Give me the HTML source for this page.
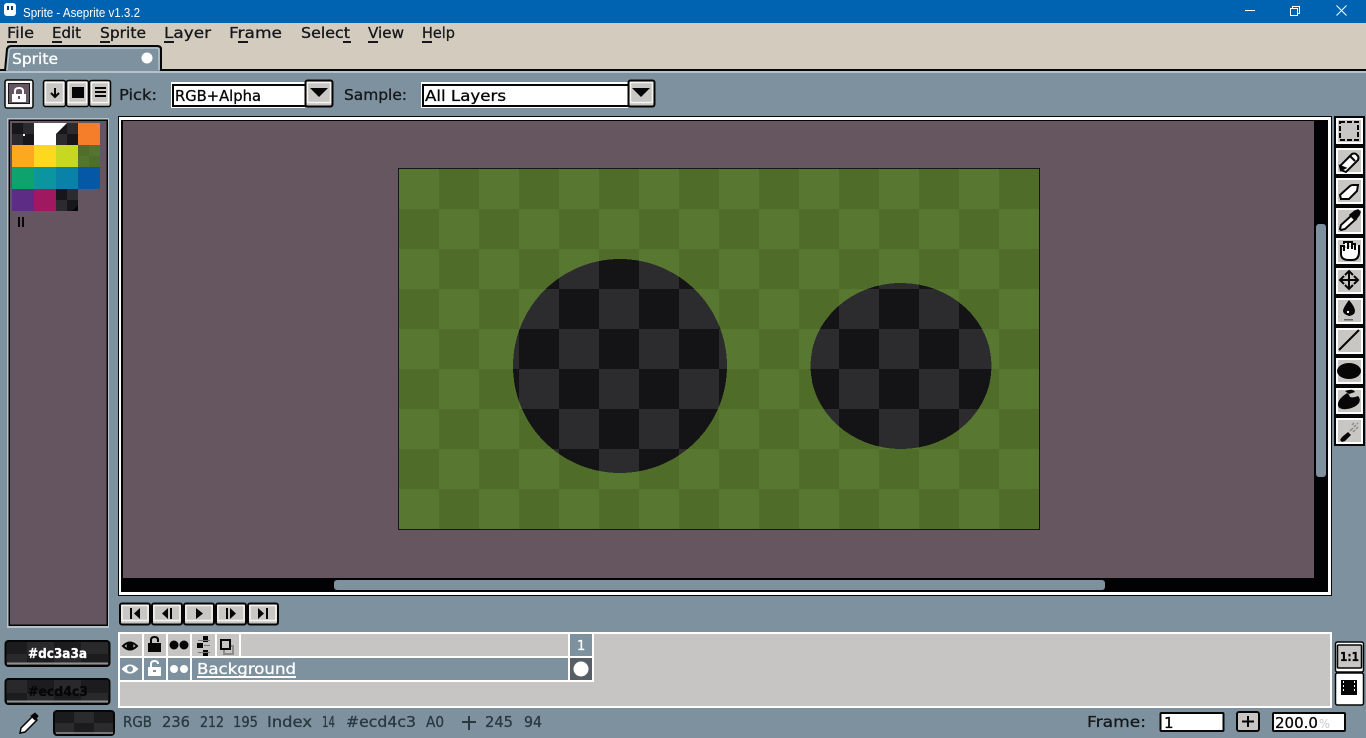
<!DOCTYPE html>
<html><head><meta charset="utf-8"><title>Sprite - Aseprite v1.3.2</title>
<style>
html,body{margin:0;padding:0;width:1366px;height:738px;overflow:hidden;background:#7d929e}
svg{display:block}
text{font-family:"DejaVu Sans","Liberation Sans",sans-serif;font-size:15px;fill:#15171a;stroke:#15171a;stroke-width:.3px;white-space:pre}
.s{font-size:15px;fill:#2a3840;stroke:#2a3840}
.w{fill:#fff;stroke:#fff}
.k{fill:#060606;stroke:#060606}
.r{shape-rendering:crispEdges}
.hl{fill:none;stroke:#f4f4f2;stroke-width:1.500px}
</style></head><body>
<svg width="1366" height="738" viewBox="0 0 1366 738" xmlns="http://www.w3.org/2000/svg">
<defs>
<pattern id="gr" patternUnits="userSpaceOnUse" x="399" y="169" width="80" height="80"><rect width="80" height="80" fill="#587831"/><rect x="40" width="40" height="40" fill="#4f6c28"/><rect y="40" width="40" height="40" fill="#4f6c28"/></pattern>
<pattern id="dk" patternUnits="userSpaceOnUse" x="399" y="169" width="80" height="80"><rect width="80" height="80" fill="#2c2c2f"/><rect x="40" width="40" height="40" fill="#141417"/><rect y="40" width="40" height="40" fill="#141417"/></pattern>
<pattern id="c1" patternUnits="userSpaceOnUse" x="12" y="123" width="22" height="22"><rect width="22" height="22" fill="#2b2b2f"/><rect width="11" height="11" fill="#17171b"/><rect x="11" y="11" width="11" height="11" fill="#17171b"/></pattern>
<pattern id="c3" patternUnits="userSpaceOnUse" x="0" y="641" width="54" height="26"><rect width="54" height="26" fill="#29292c"/><rect width="27" height="13" fill="#1c1c1f"/><rect x="27" y="13" width="27" height="13" fill="#1c1c1f"/></pattern>
<pattern id="c4" patternUnits="userSpaceOnUse" x="54" y="711" width="40" height="24"><rect width="40" height="24" fill="#2b2b2e"/><rect width="20" height="12" fill="#1b1b1e"/><rect x="20" y="12" width="20" height="12" fill="#1b1b1e"/></pattern>
</defs>

<!-- base -->
<rect class="r" width="1366" height="738" fill="#7d929e"/>
<rect class="r" width="1366" height="23" fill="#0063b1"/>
<rect class="r" y="23" width="1366" height="46" fill="#d3cbbe"/>
<rect class="r" y="69" width="1366" height="2" fill="#060606"/>
<rect class="r" y="71" width="1366" height="2" fill="#b4c3cb"/>

<!-- title bar -->
<rect x="4" y="3" width="12" height="13" rx="3" fill="#fff"/><rect x="7" y="6" width="2" height="4" fill="#0c3a66"/><rect x="11" y="6" width="2" height="4" fill="#0c3a66"/>
<text x="23" y="17" textLength="117" lengthAdjust="spacingAndGlyphs" style="font:12.500px 'Liberation Sans',sans-serif;fill:#fff;stroke:none">Sprite - Aseprite v1.3.2</text>
<rect class="r" x="1245" y="10" width="10" height="1" fill="#fff"/>
<path d="M1290.500 8.500h7v7h-7zM1292.500 8.500v-2h7v7h-2" fill="none" stroke="#fff"/>
<path d="M1336.500 5.500l10 10M1346.500 5.500l-10 10" fill="none" stroke="#fff"/>

<!-- menu -->
<text x="7" y="38" textLength="27" lengthAdjust="spacingAndGlyphs">File</text><rect class="r" x="7" y="41" width="10" height="2" fill="#15171a"/>
<text x="52" y="38" textLength="29" lengthAdjust="spacingAndGlyphs">Edit</text><rect class="r" x="52" y="41" width="10" height="2" fill="#15171a"/>
<text x="100" y="38" textLength="46" lengthAdjust="spacingAndGlyphs">Sprite</text><rect class="r" x="100" y="41" width="10" height="2" fill="#15171a"/>
<text x="164" y="38" textLength="47" lengthAdjust="spacingAndGlyphs">Layer</text><rect class="r" x="164" y="41" width="10" height="2" fill="#15171a"/>
<text x="229" y="38" textLength="53" lengthAdjust="spacingAndGlyphs">Frame</text><rect class="r" x="238" y="41" width="10" height="2" fill="#15171a"/>
<text x="301" y="38" textLength="49" lengthAdjust="spacingAndGlyphs">Select</text><rect class="r" x="343" y="41" width="8" height="2" fill="#15171a"/>
<text x="368" y="38" textLength="36" lengthAdjust="spacingAndGlyphs">View</text><rect class="r" x="368" y="41" width="10" height="2" fill="#15171a"/>
<text x="422" y="38" textLength="33" lengthAdjust="spacingAndGlyphs">Help</text><rect class="r" x="422" y="41" width="10" height="2" fill="#15171a"/>

<!-- tab -->
<path d="M5 71 L7 49 Q8 46 11 46 H157 Q161 46 161 49 V71" fill="#7d929e" stroke="#060606" stroke-width="2"/>
<path d="M7 70 L9 50 Q10 48 12 48 H156 Q159 48 159 50 V70" fill="#7d929e" stroke="#b4c3cb" stroke-width="1.500"/>
<text class="w" x="12" y="64" textLength="46" lengthAdjust="spacingAndGlyphs">Sprite</text>
<circle cx="147" cy="58" r="5.500" fill="#fff"/>
<rect class="r" x="0" y="69" width="5" height="2" fill="#060606"/>
<rect class="r" x="161" y="69" width="6" height="2" fill="#060606"/>

<!-- toolbar: lock -->
<rect x="5" y="80" width="28" height="28" rx="2" fill="#f4f4f2" stroke="#060606" stroke-width="1.500"/>
<rect x="8.500" y="83.500" width="21" height="20" fill="#655561" stroke="#15171a"/>
<rect class="r" x="12" y="94" width="14" height="8" fill="#fff"/><path d="M15 94v-3q0-3 4-3t4 3v3" fill="none" stroke="#fff" stroke-width="2"/><rect class="r" x="18" y="96" width="2" height="3" fill="#655561"/>
<!-- toolbar: group -->
<rect x="43.500" y="80.500" width="22" height="26" rx="2" fill="#c8c7c3" stroke="#060606" stroke-width="1.500"/><rect class="hl" x="45.500" y="82.500" width="18" height="20"/>
<rect x="66.500" y="80.500" width="22" height="26" rx="2" fill="#c8c7c3" stroke="#060606" stroke-width="1.500"/><rect class="hl" x="68.500" y="82.500" width="18" height="20"/>
<rect x="89.500" y="80.500" width="21" height="26" rx="2" fill="#c8c7c3" stroke="#060606" stroke-width="1.500"/><rect class="hl" x="91.500" y="82.500" width="17" height="20"/>
<path d="M55 88v9M51 93l4 4 4-4" fill="none" stroke="#060606" stroke-width="2"/>
<rect class="r" x="72" y="87" width="12" height="11" fill="#060606"/>
<rect class="r" x="95" y="87" width="11" height="2" fill="#060606"/><rect class="r" x="95" y="91" width="11" height="2" fill="#060606"/><rect class="r" x="95" y="95" width="11" height="2" fill="#060606"/>

<text x="119" y="100" textLength="38" lengthAdjust="spacingAndGlyphs">Pick:</text>
<rect class="r" x="171" y="82" width="134" height="26" fill="#fff"/>
<rect class="r" x="173" y="85" width="133" height="21" fill="#fff" stroke="#060606" stroke-width="2"/>
<text class="k" x="175" y="101" textLength="86" lengthAdjust="spacingAndGlyphs">RGB+Alpha</text>
<rect x="305.500" y="80.500" width="27" height="26" rx="2" fill="#c8c7c3" stroke="#060606" stroke-width="2"/><rect class="hl" x="307.500" y="82.500" width="23" height="20"/>
<path d="M310 88h18l-9 9z" fill="#060606"/>

<text x="344" y="100" textLength="63" lengthAdjust="spacingAndGlyphs">Sample:</text>
<rect class="r" x="421" y="82" width="207" height="26" fill="#fff"/>
<rect class="r" x="423" y="85" width="206" height="21" fill="#fff" stroke="#060606" stroke-width="2"/>
<text class="k" x="425" y="101" textLength="81" lengthAdjust="spacingAndGlyphs">All Layers</text>
<rect x="628.500" y="80.500" width="26" height="26" rx="2" fill="#c8c7c3" stroke="#060606" stroke-width="2"/><rect class="hl" x="630.500" y="82.500" width="22" height="20"/>
<path d="M632 88h18l-9 9z" fill="#060606"/>

<!-- palette -->
<rect class="r" x="7" y="118" width="102" height="510" fill="#b4c3cb"/>
<rect class="r" x="9" y="120" width="98" height="505" fill="#655561" stroke="#060606" stroke-width="1.500"/>
<rect class="r" x="12" y="123" width="22" height="22" fill="url(#c1)"/>
<rect class="r" x="23" y="134" width="2" height="2" fill="#fff"/>
<rect class="r" x="34" y="123" width="22" height="22" fill="#fff"/>
<rect class="r" x="56" y="123" width="22" height="22" fill="url(#c1)"/>
<path d="M56 123h11l-11 11z" fill="#fff"/>
<rect class="r" x="78" y="123" width="22" height="22" fill="#f47e2a"/>
<rect class="r" x="12" y="145" width="22" height="22" fill="#fca91e"/>
<rect class="r" x="34" y="145" width="22" height="22" fill="#fcd91e"/>
<rect class="r" x="56" y="145" width="22" height="22" fill="#c6d81f"/>
<g class="r"><rect x="78" y="145" width="22" height="22" fill="#55742f"/><rect x="78" y="145" width="11" height="11" fill="#4f6d2b"/><rect x="89" y="156" width="11" height="11" fill="#4f6d2b"/></g>
<rect class="r" x="12" y="167" width="22" height="22" fill="#0ea36d"/>
<rect class="r" x="34" y="167" width="22" height="22" fill="#0a95a0"/>
<rect class="r" x="56" y="167" width="22" height="22" fill="#0a82a8"/>
<rect class="r" x="78" y="167" width="22" height="22" fill="#0458a6"/>
<rect class="r" x="12" y="189" width="22" height="22" fill="#5d2d85"/>
<rect class="r" x="34" y="189" width="22" height="22" fill="#a01860"/>
<rect class="r" x="56" y="189" width="22" height="22" fill="url(#c1)"/>
<path d="M78 211h-6l6-6z" fill="#060606"/>
<rect class="r" x="18" y="217" width="2" height="10" fill="#060606"/><rect class="r" x="22" y="217" width="2" height="10" fill="#060606"/>

<!-- editor -->
<rect class="r" x="118" y="116" width="1214" height="480" fill="#060606"/>
<rect class="r" x="119" y="117" width="1212" height="478" fill="#fff"/>
<rect class="r" x="121" y="120" width="1207" height="472" fill="#020204"/>
<rect class="r" x="123" y="121" width="1191" height="457" fill="#665660"/>
<rect class="r" x="398.500" y="168.500" width="641" height="361" fill="url(#gr)" stroke="#15171a"/>
<ellipse cx="620" cy="366" rx="107" ry="107" fill="url(#dk)" class="r"/>
<ellipse cx="901" cy="366" rx="90.500" ry="83" fill="url(#dk)" class="r"/>
<rect x="334" y="580" width="771" height="10" rx="3" fill="#7d929e"/>
<rect x="1316" y="224" width="10" height="253" rx="3" fill="#7d929e"/>

<!-- tools -->
<rect class="r" x="1334" y="116" width="31" height="330" fill="#060606"/>
<g class="r" fill="#fff">
<rect x="1336" y="118" width="27" height="26"/><rect x="1336" y="148" width="27" height="26"/><rect x="1336" y="178" width="27" height="26"/><rect x="1336" y="208" width="27" height="26"/><rect x="1336" y="238" width="27" height="26"/><rect x="1336" y="268" width="27" height="26"/><rect x="1336" y="298" width="27" height="26"/><rect x="1336" y="328" width="27" height="26"/><rect x="1336" y="358" width="27" height="26"/><rect x="1336" y="388" width="27" height="26"/><rect x="1336" y="418" width="27" height="26"/>
</g>
<g class="r" fill="#c8c7c3">
<rect x="1338" y="120" width="23" height="22"/><rect x="1338" y="150" width="23" height="22"/><rect x="1338" y="180" width="23" height="22"/><rect x="1338" y="210" width="23" height="22"/><rect x="1338" y="240" width="23" height="22"/><rect x="1338" y="270" width="23" height="22"/><rect x="1338" y="300" width="23" height="22"/><rect x="1338" y="330" width="23" height="22"/><rect x="1338" y="360" width="23" height="22"/><rect x="1338" y="390" width="23" height="22"/><rect x="1338" y="420" width="23" height="22"/>
</g>
<rect x="1340" y="122" width="18" height="18" fill="none" stroke="#060606" stroke-width="2" stroke-dasharray="5 2"/>
<path d="M1341 170l-1-4 12-12q2-1 4 0l2 2q1 2 0 4l-12 12z" fill="#fff" stroke="#060606" stroke-width="2"/><path d="M1341 170l-1-4 5 2z" fill="#060606" stroke="#060606" stroke-width="2"/><path d="M1350 156l5 5" stroke="#060606" stroke-width="2"/>
<path d="M1340 195l10-9q1-1 3-1h5l-1 6-8 8h-8z" fill="#fff" stroke="#060606" stroke-width="2"/>
<path d="M1341 230l-1-1 1-4 11-10 4 4-11 10z" fill="#fff" stroke="#060606" stroke-width="2"/><path d="M1350 215l5-4 3-1 2 2-1 3-4 5z" fill="#060606" stroke="#060606" stroke-width="1.500"/>
<path d="M1341 249v5q0 6 8 6h3q7 0 7-8v-7m-18 4v-3h3v5m0-7v-2h4v7m0-7h4v7m0-5h3v6" fill="#fff" stroke="#060606" stroke-width="2"/>
<path d="M1349 271v18M1340 280h18M1345 275l4-4 4 4M1345 285l4 4 4-4M1344 276l-4 4 4 4M1354 276l4 4-4 4" fill="none" stroke="#060606" stroke-width="2"/>
<path d="M1349 300q-6 8-6 11t6 5q6-1 6-5t-6-11z" fill="#060606"/><rect class="r" x="1344" y="319" width="9" height="1.500" fill="#666"/><rect class="r" x="1347" y="311" width="2" height="2" fill="#fff"/>
<path d="M1339 350l20-20" stroke="#060606" stroke-width="2"/>
<ellipse cx="1349" cy="371" rx="12" ry="8" fill="#060606"/>
<path d="M1343 396q-6 5-5 10 2 4 9 3 8-1 12-6 2-4-1-7-4 2-8 1-1-3-3-4z M1345 391q8-3 10 1l-6 2z" fill="#060606"/>
<path d="M1340 440l2-3 6-5 3 3-6 6-3 1z" fill="#060606"/><path d="M1350 431l3-3M1354 427l2-2M1357 424l1-1M1353 432l2-2M1356 429l2-2M1352 425l2-2" stroke="#8a8a88" stroke-width="1.500"/>

<!-- animation buttons -->
<g stroke="#060606" stroke-width="2" fill="#c8c7c3">
<rect x="120" y="603.500" width="30" height="21" rx="2"/><rect x="152" y="603.500" width="30" height="21" rx="2"/><rect x="184" y="603.500" width="30" height="21" rx="2"/><rect x="216" y="603.500" width="30" height="21" rx="2"/><rect x="248" y="603.500" width="30" height="21" rx="2"/>
</g>
<g class="hl"><rect x="122" y="605.500" width="26" height="15"/><rect x="154" y="605.500" width="26" height="15"/><rect x="186" y="605.500" width="26" height="15"/><rect x="218" y="605.500" width="26" height="15"/><rect x="250" y="605.500" width="26" height="15"/></g>
<g fill="#060606">
<rect class="r" x="130" y="608" width="2" height="11"/><path d="M140 608v11l-6-5.500z"/>
<path d="M168 608v11l-6-5.500z"/><rect class="r" x="170" y="608" width="2" height="11"/>
<path d="M196 608v11l7-5.500z"/>
<rect class="r" x="226" y="608" width="2" height="11"/><path d="M230 608v11l6-5.500z"/>
<path d="M258 608v11l6-5.500z"/><rect class="r" x="266" y="608" width="2" height="11"/>
</g>

<!-- color bars -->
<g>
<rect x="5.500" y="641" width="104" height="25" rx="3" fill="url(#c3)" stroke="#060606" stroke-width="2"/>
<path d="M7 663.500h101" stroke="#8f9290" stroke-width="2"/>
<text class="w" x="28" y="658" textLength="59" lengthAdjust="spacingAndGlyphs" style="font-size:13px;font-weight:bold">#dc3a3a</text>
<rect x="5.500" y="679" width="104" height="25" rx="3" fill="url(#c3)" stroke="#060606" stroke-width="2"/>
<path d="M7 701.500h101" stroke="#8f9290" stroke-width="2"/>
<text class="k" x="28" y="696" textLength="60" lengthAdjust="spacingAndGlyphs" style="font-size:13px;font-weight:bold">#ecd4c3</text>
</g>

<!-- timeline -->
<rect class="r" x="118" y="632" width="1214" height="76" fill="#c6c5c4"/>
<rect class="r" x="118" y="632" width="1214" height="2" fill="#fff"/>
<rect class="r" x="118" y="706" width="1214" height="2" fill="#fff"/>
<rect class="r" x="118" y="632" width="2" height="76" fill="#fff"/>
<rect class="r" x="1330" y="632" width="2" height="76" fill="#fff"/>
<rect class="r" x="120" y="658" width="449" height="22" fill="#7d929e"/>
<rect class="r" x="570" y="634" width="22" height="22" fill="#7d929e"/>
<rect class="r" x="570" y="658" width="22" height="22" fill="#565f66"/>
<rect class="r" x="118" y="656" width="475" height="2" fill="#fff"/>
<rect class="r" x="118" y="680" width="475" height="2" fill="#fff"/>
<rect class="r" x="568" y="632" width="2" height="50" fill="#fff"/>
<rect class="r" x="592" y="632" width="2" height="50" fill="#fff"/>
<g class="r" fill="#fff">
<rect x="142" y="634" width="2" height="47"/>
<rect x="166" y="634" width="2" height="47"/><rect x="190" y="634" width="2" height="47"/>
<rect x="215" y="634" width="2" height="23"/><rect x="239" y="634" width="2" height="23"/>
</g>
<path d="M123 646q7-7 14 0q-7 7-14 0z" fill="none" stroke="#060606" stroke-width="2"/><circle cx="130" cy="646" r="3.500" fill="#060606"/>
<rect class="r" x="148" y="643" width="13" height="9" fill="#060606"/><path d="M151 643v-3q0-3 3.500-3t3.500 3v2" fill="none" stroke="#060606" stroke-width="2"/>
<circle cx="174" cy="645" r="4.500" fill="#060606"/><circle cx="184" cy="645" r="4.500" fill="#060606"/>
<g class="r" fill="#060606"><rect x="203" y="636" width="5" height="6"/><rect x="197" y="643" width="6" height="5"/><rect x="203" y="650" width="5" height="6"/></g>
<g class="r" fill="#777"><rect x="198" y="640" width="12" height="1"/><rect x="204" y="645" width="6" height="1"/><rect x="198" y="652" width="12" height="1"/></g>
<rect x="224" y="646" width="9" height="8" fill="none" stroke="#8b8b89" stroke-width="2"/><rect x="221" y="640" width="9" height="9" fill="#c6c5c4" stroke="#060606" stroke-width="2"/>
<path d="M123 669q7-7 14 0q-7 7-14 0z" fill="#fff" stroke="#fff" stroke-width="2"/><circle cx="130" cy="669" r="3" fill="#7d929e"/>
<rect class="r" x="148" y="667" width="13" height="9" fill="#fff"/><path d="M151 667v-3q0-3 3.500-3t3.500 3" fill="none" stroke="#fff" stroke-width="2"/><rect class="r" x="153" y="670" width="3" height="2" fill="#7d929e"/>
<circle cx="174" cy="669" r="4" fill="#fff"/><circle cx="184" cy="669" r="4" fill="#fff"/>
<text class="w" x="197" y="674" textLength="99" lengthAdjust="spacingAndGlyphs">Background</text>
<rect class="r" x="197" y="676" width="99" height="2" fill="#fff"/>
<text class="w" x="577" y="650" style="font-size:13px">1</text>
<circle cx="581" cy="669" r="7.500" fill="#fff"/>

<!-- right small buttons -->
<rect x="1335.500" y="642" width="28" height="30" rx="2" fill="#fff" stroke="#060606" stroke-width="1.500"/>
<rect x="1337.500" y="645" width="24" height="23" rx="1" fill="#c8c7c3" stroke="#060606" stroke-width="1.500"/>
<text class="k" x="1340" y="661" textLength="19" lengthAdjust="spacingAndGlyphs" style="font-size:12px;font-weight:bold">1:1</text>
<rect x="1335.500" y="673" width="28" height="32" rx="2" fill="#fff" stroke="#060606" stroke-width="1.500"/>
<rect class="r" x="1341" y="680" width="16" height="15" fill="#060606"/>
<g class="r" fill="#fff"><rect x="1343" y="681" width="1" height="2"/><rect x="1343" y="685" width="1" height="2"/><rect x="1343" y="689" width="1" height="2"/><rect x="1354" y="681" width="1" height="2"/><rect x="1354" y="685" width="1" height="2"/><rect x="1354" y="689" width="1" height="2"/></g>

<!-- status bar -->
<path d="M20 733l1-5 12-12 4 4-12 12z" fill="#fff" stroke="#060606" stroke-width="1.500"/><path d="M31 716l4-3 3 3-3 4z" fill="#060606" stroke="#060606"/>
<rect x="54" y="711" width="60" height="24" rx="3" fill="url(#c4)" stroke="#060606" stroke-width="2"/>
<path d="M56 733h57" stroke="#8f9290" stroke-width="1.500"/>
<text class="s" x="123" y="727" textLength="29" lengthAdjust="spacingAndGlyphs">RGB</text>
<text class="s" x="162" y="727" textLength="28" lengthAdjust="spacingAndGlyphs">236</text>
<text class="s" x="200" y="727" textLength="24" lengthAdjust="spacingAndGlyphs">212</text>
<text class="s" x="233" y="727" textLength="25" lengthAdjust="spacingAndGlyphs">195</text>
<text class="s" x="267" y="727" textLength="45" lengthAdjust="spacingAndGlyphs">Index</text>
<text class="s" x="322" y="727" textLength="13" lengthAdjust="spacingAndGlyphs">14</text>
<text class="s" x="346" y="727" textLength="70" lengthAdjust="spacingAndGlyphs">#ecd4c3</text>
<text class="s" x="426" y="727" textLength="18" lengthAdjust="spacingAndGlyphs">A0</text>
<path d="M469 716v14M462 722h14" stroke="#2a3840" stroke-width="2"/>
<text class="s" x="485" y="727" textLength="28" lengthAdjust="spacingAndGlyphs">245</text>
<text class="s" x="524" y="727" textLength="18" lengthAdjust="spacingAndGlyphs">94</text>
<text x="1087" y="727" textLength="59" lengthAdjust="spacingAndGlyphs">Frame:</text>
<rect x="1160.500" y="713" width="63" height="18" rx="1" fill="#fff" stroke="#060606" stroke-width="2"/>
<text class="k" x="1164" y="728">1</text>
<rect x="1237" y="712" width="22" height="19" rx="2" fill="#c8c7c3" stroke="#060606" stroke-width="2"/>
<path d="M1248 716v11M1242 721.500h12" stroke="#060606" stroke-width="2"/>
<rect x="1273" y="713" width="72" height="18" rx="1" fill="#fff" stroke="#060606" stroke-width="2"/>
<text class="k" x="1275" y="728" textLength="43" lengthAdjust="spacingAndGlyphs">200.0</text>
<text x="1319" y="728" textLength="11" lengthAdjust="spacingAndGlyphs" style="fill:#c8c8c8;stroke:none;font-size:12px">%</text>
</svg>
</body></html>
